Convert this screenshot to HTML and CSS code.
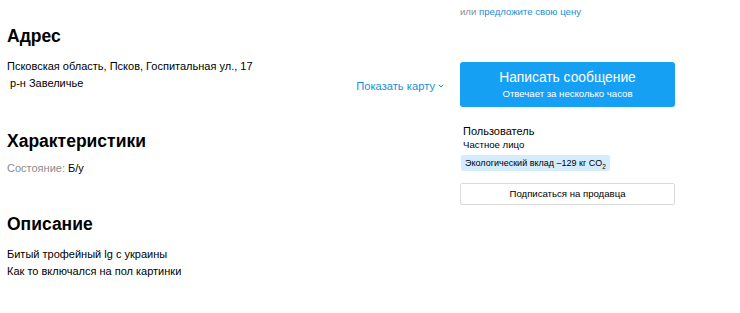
FILE: index.html
```html
<!DOCTYPE html>
<html lang="ru">

<head>
    <meta charset="UTF-8">
    <title>Объявление</title>
    <link rel="stylesheet" href="styles.css">
</head>

<body>
    <div class="page">
        <div class="main">
            <div class="section address">
                <h2>Адрес</h2>
                <div class="address-row">
                    <div class="address-text">
                        <p>Псковская область, Псков, Госпитальная ул., 17</p>
                        <p>&nbsp;р-н Завеличье</p>
                    </div>
                    <a class="map-link" href="#">Показать карту<svg class="chevron" width="6" height="4" viewBox="0 0 6 4"><path d="M0.8 0.8 L3 3 L5.2 0.8" fill="none" stroke="currentColor" stroke-width="1"/></svg></a>
                </div>
            </div>
            <div class="section params">
                <h2>Характеристики</h2>
                <p><span class="label">Состояние:</span> Б/у</p>
            </div>
            <div class="section desc">
                <h2>Описание</h2>
                <p>Битый трофейный lg с украины</p>
                <p>Как то включался на пол картинки</p>
            </div>
        </div>
        <div class="side">
            <p class="offer">или <a href="#">предложите свою цену</a></p>
            <a class="btn-write" href="#">
                <span class="btn-title">Написать сообщение</span>
                <span class="btn-sub">Отвечает за несколько часов</span>
            </a>
            <div class="seller">
                <div class="seller-name">Пользователь</div>
                <div class="seller-type">Частное лицо</div>
                <span class="eco">Экологический вклад –129 кг CO<sub>2</sub></span>
            </div>
            <a class="btn-sub-seller" href="#">Подписаться на продавца</a>
        </div>
    </div>
</body>

</html>
```

FILE: styles.css
```css
* {
    padding: 0;
    margin: 0;
    box-sizing: border-box;
}

body {
    font-family: "Liberation Sans", Arial, sans-serif;
    color: #000;
    background: #fff;
}

a {
    text-decoration: none;
}

.page {
    display: flex;
    gap: 16px;
    padding-left: 7px;
}

.main {
    width: 437px;
}

.section h2 {
    font-size: 17.5px;
    line-height: 24px;
    font-weight: bold;
}

.section p {
    font-size: 11px;
    line-height: 17px;
}

.address {
    padding-top: 24px;
}

.address-row {
    display: flex;
    justify-content: space-between;
    align-items: flex-end;
    margin-top: 9.5px;
}

.map-link {
    color: #1b8fd4;
    font-size: 11.2px;
    line-height: 17px;
    margin-bottom: -3px;
}

.map-link .chevron {
    margin-left: 3px;
    vertical-align: 2px;
}

.params {
    margin-top: 37.5px;
}

.params p {
    margin-top: 6.5px;
}

.params .label {
    color: #8c8c8c;
}

.desc {
    margin-top: 35.5px;
}

.desc h2 {
    margin-bottom: 9.5px;
}

/* правая колонка */
.side {
    width: 215px;
}

.offer {
    font-size: 9.6px;
    line-height: 14px;
    padding-top: 5px;
    color: #8a8a8a;
}

.offer a {
    color: #1b8fd4;
}

.btn-write {
    display: flex;
    flex-direction: column;
    align-items: center;
    height: 45px;
    margin-top: 43px;
    padding-top: 7px;
    background: #16a0f4;
    border-radius: 3px;
    color: #fff;
}

.btn-title {
    font-size: 13.8px;
    line-height: 18px;
}

.btn-sub {
    font-size: 9.6px;
    line-height: 14px;
}

.seller {
    margin-top: 17px;
    padding-left: 3px;
}

.seller-name {
    font-size: 11px;
    line-height: 14px;
}

.seller-type {
    font-size: 9.6px;
    line-height: 13px;
}

.eco {
    display: inline-block;
    margin-top: 4px;
    margin-left: -2px;
    height: 16px;
    padding: 0 4px;
    background: #d4ecfb;
    border-radius: 2px;
    font-size: 9px;
    line-height: 16px;
}

.eco sub {
    font-size: 6.5px;
    line-height: 0;
}

.btn-sub-seller {
    display: block;
    margin-top: 12px;
    height: 22px;
    border: 1px solid #d9d9d9;
    border-radius: 2px;
    color: #000;
    font-size: 9.6px;
    line-height: 20px;
    text-align: center;
}
```
